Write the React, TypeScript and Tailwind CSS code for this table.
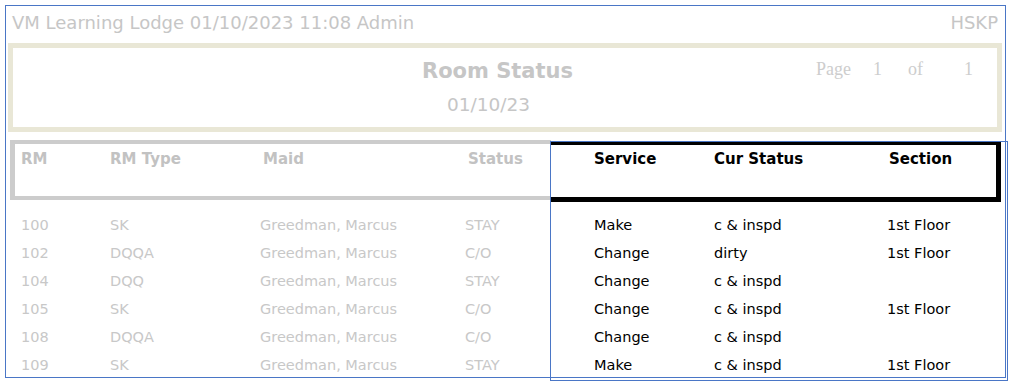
const rows = [
  { rm: "100", type: "SK", maid: "Greedman, Marcus", status: "STAY", service: "Make", cur: "c & inspd", section: "1st Floor" },
  { rm: "102", type: "DQQA", maid: "Greedman, Marcus", status: "C/O", service: "Change", cur: "dirty", section: "1st Floor" },
  { rm: "104", type: "DQQ", maid: "Greedman, Marcus", status: "STAY", service: "Change", cur: "c & inspd", section: "" },
  { rm: "105", type: "SK", maid: "Greedman, Marcus", status: "C/O", service: "Change", cur: "c & inspd", section: "1st Floor" },
  { rm: "108", type: "DQQA", maid: "Greedman, Marcus", status: "C/O", service: "Change", cur: "c & inspd", section: "" },
  { rm: "109", type: "SK", maid: "Greedman, Marcus", status: "STAY", service: "Make", cur: "c & inspd", section: "1st Floor" },
];

const sans = "font-['DejaVu_Sans',Verdana,sans-serif]";

export default function App() {
  return (
    <div className={`relative h-[385px] w-[1013px] overflow-hidden bg-white p-[5px] ${sans}`}>
      <div className="flex h-[373px] w-[1001px] flex-col border border-[#4a76c6]">
        {/* top line */}
        <div className="flex h-[37px] shrink-0 items-start justify-between px-[6px] pt-[6px] text-[18px] leading-[22px] text-[#c6c6c6]">
          <span>VM Learning Lodge 01/10/2023 11:08 Admin</span>
          <span className="mr-[1px]">HSKP</span>
        </div>

        {/* report title */}
        <div className="ml-[2px] grid h-[89px] w-[994px] shrink-0 grid-cols-[1fr_auto_1fr] border-[5px] border-[#e9e7d6]">
          <div />
          <div className="flex flex-col items-center pt-[10px] text-[#c6c6c6]">
            <span className="mr-[15px] text-[21px] font-bold leading-[26px]">Room Status</span>
            <span className="mr-[33px] mt-[10px] text-[18.5px] leading-[22px]">01/10/23</span>
          </div>
          <div className="flex pl-[228px] pt-[10px] font-['Liberation_Serif',serif] text-[18px] leading-[22px] text-[#cdcdcd]">
            <span className="w-[57px]">Page</span>
            <span className="w-[35px]">1</span>
            <span className="w-[56px]">of</span>
            <span>1</span>
          </div>
        </div>

        {/* column headings */}
        <div className="ml-[4px] mt-[8px] flex h-[62px] shrink-0 items-start text-[15px] font-bold leading-[18px]">
          <div className="grid h-[60px] w-[541px] grid-cols-[89px_153px_205px_1fr] border-b-4 border-l-[5px] border-t-4 border-[#cccccc] pl-[6px] pt-[6px] text-[#c2c2c2]">
            <span>RM</span>
            <span>RM Type</span>
            <span>Maid</span>
            <span>Status</span>
          </div>
          <div className="mt-[2px] grid h-[60px] w-[450px] grid-cols-[120px_175px_1fr] border-b-[5px] border-r-[5px] border-t-[3px] border-black pl-[43px] pt-[5px] text-black">
            <span>Service</span>
            <span>Cur Status</span>
            <span>Section</span>
          </div>
        </div>

        {/* rows */}
        <div className="mt-[9px] flex shrink-0 flex-col pl-[15px] text-[14.5px]">
          {rows.map((r) => (
            <div key={r.rm} className="grid h-[28px] grid-cols-[89px_150px_205px_129px_120px_173px_1fr] items-center leading-[18px]">
              <span className="text-[#c8c8c8]">{r.rm}</span>
              <span className="text-[#c8c8c8]">{r.type}</span>
              <span className="text-[#c8c8c8]">{r.maid}</span>
              <span className="text-[#c8c8c8]">{r.status}</span>
              <span className="text-black">{r.service}</span>
              <span className="text-black">{r.cur}</span>
              <span className="text-black">{r.section}</span>
            </div>
          ))}
        </div>
      </div>

      {/* selection frame over the right-hand columns */}
      <div className="pointer-events-none absolute left-[550px] top-[141px] h-[240px] w-[458px] border border-[#4a76c6]" />
    </div>
  );
}
